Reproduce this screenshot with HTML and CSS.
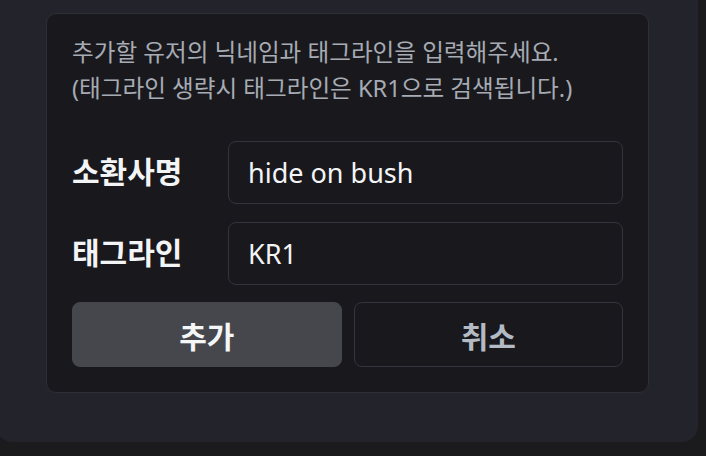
FILE: index.html
```html
<!DOCTYPE html>
<html lang="ko">
<head>
<meta charset="utf-8">
<link rel="stylesheet" href="styles.css">
</head>
<body>
<div class="panel">
  <div class="card">
    <p class="desc">추가할 유저의 닉네임과 태그라인을 입력해주세요.<br>(태그라인 생략시 태그라인은 KR1으로 검색됩니다.)</p>
    <div class="field">
      <label class="label">소환사명</label>
      <div class="input">hide on bush</div>
    </div>
    <div class="field">
      <label class="label">태그라인</label>
      <div class="input">KR1</div>
    </div>
    <div class="actions">
      <button class="btn btn-primary">추가</button>
      <button class="btn btn-secondary">취소</button>
    </div>
  </div>
</div>
</body>
</html>
```

FILE: styles.css
```css
* { box-sizing: border-box; }
html, body {
  margin: 0;
  padding: 0;
  background: #1b1b1d;
  overflow: hidden;
}
body {
  font-family: "Noto Sans", "Noto Sans CJK KR", sans-serif;
  width: 706px;
  height: 456px;
}
.panel {
  margin-left: -4px;
  width: 702px;
  height: 442px;
  background: #23232b;
  border-radius: 0 0 16px 16px;
  padding: 13px 0 0 50px;
}
.card {
  width: 603px;
  height: 380px;
  background: #19191d;
  border: 1px solid #2e2e37;
  border-radius: 10px;
  padding: 20px 25px 24px 25px;
  display: flex;
  flex-direction: column;
}
.desc {
  margin: 0 0 35px 0;
  font-size: 23.6px;
  line-height: 36px;
  color: #a6abb4;
}
.field {
  display: flex;
  align-items: center;
  margin-bottom: 18px;
}
.label {
  width: 156px;
  flex: none;
  font-size: 30px;
  font-weight: 700;
  color: #f3f4f6;
  margin-top: -5px;
}
.input {
  flex: 1;
  height: 63px;
  border: 1px solid #33333d;
  border-radius: 8px;
  background: #19191d;
  padding: 0 19px;
  display: flex;
  align-items: center;
  font-size: 27px;
  color: #f3f4f6;
}
.actions {
  display: grid;
  grid-template-columns: 1fr 1fr;
  gap: 12px;
  margin-top: -1px;
}
.btn {
  height: 65px;
  border-radius: 8px;
  font-family: "Noto Sans", "Noto Sans CJK KR", sans-serif;
  font-size: 30px;
  font-weight: 700;
  padding: 0;
}
.btn-primary {
  background: #46474c;
  border: 1px solid #46474c;
  color: #f4f6f8;
}
.btn-secondary {
  background: #19191d;
  border: 1px solid #34343e;
  color: #b3bac4;
}
```
